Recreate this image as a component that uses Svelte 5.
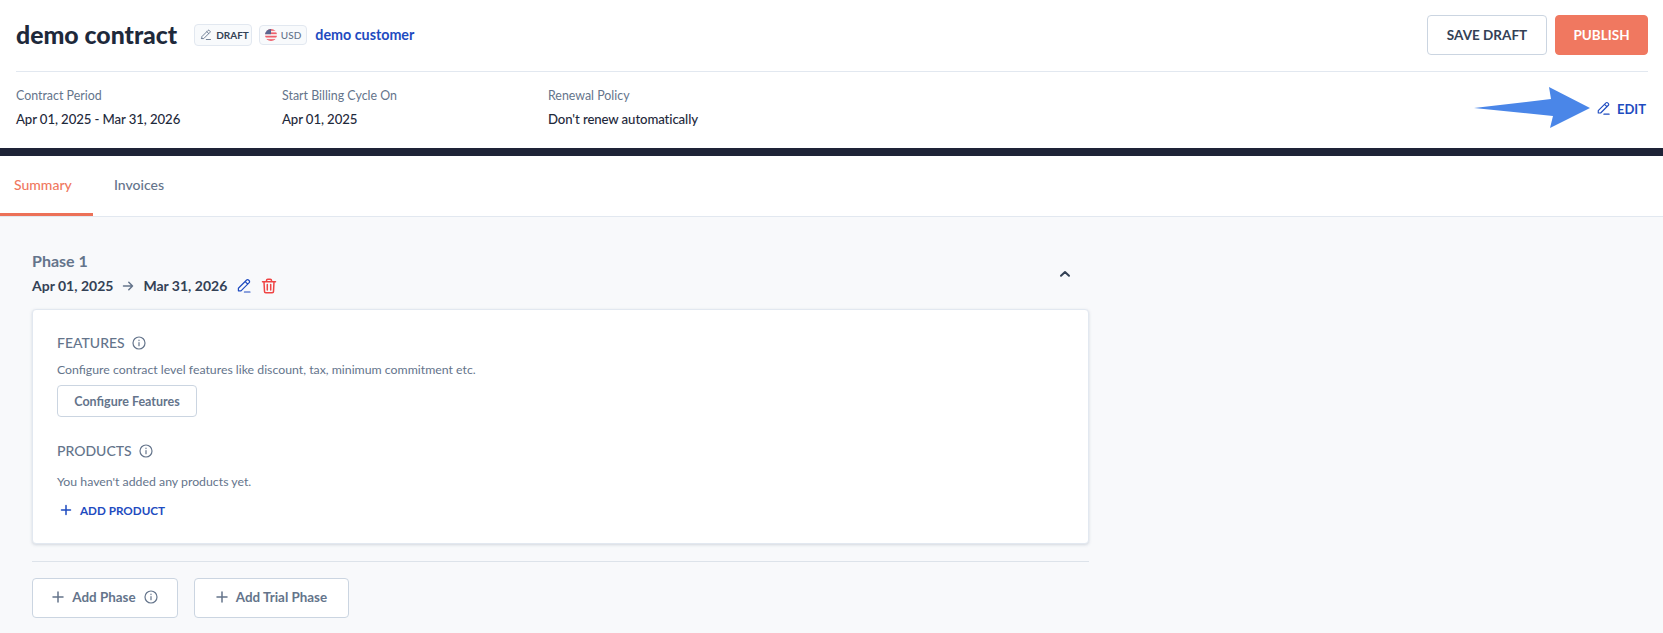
<script>
  const meta = [
    { label: 'Contract Period', value: 'Apr 01, 2025 - Mar 31, 2026' },
    { label: 'Start Billing Cycle On', value: 'Apr 01, 2025' },
    { label: 'Renewal Policy', value: "Don't renew automatically" }
  ];
  const pencil = 'M3 16v-3.200L13.300 2.500a1.600 1.600 0 0 1 2.300 0l.9.9a1.600 1.600 0 0 1 0 2.300L6.200 16H3zM11.400 4.400l3.200 3.200M10.500 17.500h7';
</script>

<div class="page">
  <header class="head">
    <div class="top">
      <h1>demo contract</h1>
      <span class="chip draft">
        <svg viewBox="0 0 20 20" width="12" height="12"><path d={pencil} /></svg>
        DRAFT
      </span>
      <span class="chip usd">
        <svg viewBox="0 0 12 12" width="12" height="12">
          <clipPath id="flag"><circle cx="6" cy="6" r="6" /></clipPath>
          <g clip-path="url(#flag)">
            <rect width="12" height="12" fill="#f6f1f1" />
            <rect y="0" width="12" height="1.800" fill="#ee5f6c" />
            <rect y="3.400" width="12" height="1.700" fill="#ee5f6c" />
            <rect y="6.800" width="12" height="1.700" fill="#ee5f6c" />
            <rect y="10.200" width="12" height="1.800" fill="#ee5f6c" />
            <rect width="6" height="5.200" fill="#5a6690" />
          </g>
        </svg>
        USD
      </span>
      <span class="customer">demo customer</span>
      <div class="actions">
        <button class="save">SAVE DRAFT</button>
        <button class="publish">PUBLISH</button>
      </div>
    </div>
    <div class="meta">
      {#each meta as m}
        <div class="meta-col">
          <div class="meta-label">{m.label}</div>
          <div class="meta-value">{m.value}</div>
        </div>
      {/each}
      <span class="edit">
        <svg viewBox="0 0 20 20" width="15" height="15"><path d={pencil} /></svg>
        EDIT
      </span>
      <svg class="arrow" viewBox="0 0 120 44" width="120" height="44">
        <polygon points="0,21 77,12 75,0 116,21 76,41 79,29" fill="#4a86e8" />
      </svg>
    </div>
  </header>
  <div class="bar"></div>
  <nav class="tabs">
    <span class="tab active">Summary</span>
    <span class="tab">Invoices</span>
  </nav>
  <main class="content">
    <section class="phase">
      <div class="phase-head">
        <div>
          <div class="phase-title">Phase 1</div>
          <div class="phase-dates">
            <span>Apr 01, 2025</span>
            <svg class="to" viewBox="0 0 12 12" width="12" height="12"><path d="M1.500 6h9M6.800 2.300 10.500 6l-3.700 3.700" /></svg>
            <span>Mar 31, 2026</span>
            <svg class="pen" viewBox="0 0 20 20" width="16" height="16"><path d={pencil} /></svg>
            <svg class="trash" viewBox="0 0 16 16" width="16" height="16"><path d="M1.500 3.700h13M5.500 3.500V2.600c0-.8.5-1.300 1.300-1.300h2.400c.8 0 1.300.5 1.300 1.300v.9M3 3.700l.5 9.800c0 .8.6 1.200 1.300 1.200h6.400c.7 0 1.300-.4 1.300-1.200l.5-9.800M6.300 6.500v5.500M9.700 6.500v5.500" /></svg>
          </div>
        </div>
        <svg class="chev" viewBox="0 0 12 12" width="12" height="12"><path d="M2 7.800 6 4l4 3.800" /></svg>
      </div>
      <div class="card">
        <div class="sec-title">FEATURES
          <svg class="info" viewBox="0 0 14 14" width="14" height="14"><path d="M13 7A6 6 0 1 1 1 7a6 6 0 0 1 12 0zM7 6.500v3.200M7 4.200v.4" /></svg>
        </div>
        <p class="features-text">Configure contract level features like discount, tax, minimum commitment etc.</p>
        <button class="configure">Configure Features</button>
        <div class="sec-title products">PRODUCTS
          <svg class="info" viewBox="0 0 14 14" width="14" height="14"><path d="M13 7A6 6 0 1 1 1 7a6 6 0 0 1 12 0zM7 6.500v3.200M7 4.200v.4" /></svg>
        </div>
        <p class="products-text">You haven't added any products yet.</p>
        <div class="add-product">
          <svg viewBox="0 0 12 12" width="12" height="12"><path d="M6 1.500v9M1.500 6h9" /></svg>
          ADD PRODUCT
        </div>
      </div>
      <div class="add-row">
        <button class="add phase-btn">
          <svg class="plus" viewBox="0 0 12 12" width="12" height="12"><path d="M6 1v10M1 6h10" /></svg>
          <span>Add Phase</span>
          <svg class="info" viewBox="0 0 14 14" width="14" height="14"><path d="M13 7A6 6 0 1 1 1 7a6 6 0 0 1 12 0zM7 6.500v3.200M7 4.200v.4" /></svg>
        </button>
        <button class="add trial-btn">
          <svg class="plus" viewBox="0 0 12 12" width="12" height="12"><path d="M6 1v10M1 6h10" /></svg>
          <span>Add Trial Phase</span>
        </button>
      </div>
    </section>
  </main>
</div>

<style>
  :global(body) {
    margin: 0;
    background: #fff;
  }
  .page {
    font-family: Lato, "Open Sans", sans-serif;
    color: #1f2937;
    height: 633px;
    overflow: hidden;
    display: flex;
    flex-direction: column;
  }
  svg path {
    fill: none;
    stroke: currentColor;
    stroke-width: 1.500;
    stroke-linecap: round;
    stroke-linejoin: round;
  }
  button {
    font-family: inherit;
    background: #fff;
    border: 1px solid #cbd5e1;
    border-radius: 4px;
    padding: 0;
  }
  .head {
    padding: 0 15px 0 16px;
    height: 148px;
    box-sizing: border-box;
  }
  .top {
    display: flex;
    align-items: center;
    height: 72px;
    padding-bottom: 2px;
    border-bottom: 1px solid #e2e8f0;
    box-sizing: border-box;
  }
  h1 {
    margin: 0 17px 0 0;
    font-size: 24.800px;
    font-weight: 900;
    color: #1e293b;
  }
  .chip {
    display: inline-flex;
    align-items: center;
    gap: 4px;
    height: 20px;
    border: 1px solid #e2e8f0;
    border-radius: 4px;
    background: #f8fafc;
    font-size: 10px;
  }
  .draft {
    padding: 0 2px 0 5px;
    margin-right: 7px;
    font-weight: 700;
    color: #334155;
  }
  .draft svg {
    color: #64748b;
  }
  .usd {
    padding: 0 5px;
    margin-right: 8px;
    color: #64748b;
    font-weight: 500;
    height: 18px;
  }
  .customer {
    font-size: 14.300px;
    font-weight: 700;
    color: #1e4bc0;
  }
  .actions {
    margin-left: auto;
    display: flex;
    gap: 8px;
  }
  .actions button {
    height: 40px;
    font-size: 13.500px;
    font-weight: 700;
  }
  .save {
    width: 120px;
    color: #334155;
  }
  .publish {
    width: 93px;
    color: #fff;
    background: #f07860;
    border-color: #f07860;
  }
  .meta {
    display: flex;
    position: relative;
    padding-top: 17px;
  }
  .meta-col {
    width: 266px;
  }
  .meta-label {
    font-size: 12.400px;
    line-height: 14px;
    color: #64748b;
  }
  .meta-value {
    font-size: 13.200px;
    letter-spacing: -0.1px;
    line-height: 16px;
    font-weight: 500;
    color: #1e293b;
    margin-top: 8px;
  }
  .edit {
    margin-left: auto;
    margin-right: 2px;
    align-self: center;
    display: flex;
    align-items: center;
    gap: 6px;
    margin-top: 1px;
    font-size: 13px;
    font-weight: 700;
    color: #1e4bc0;
  }
  .arrow {
    position: absolute;
    right: 54px;
    top: 15px;
  }
  .bar {
    height: 8px;
    background: #1e2337;
    flex: none;
  }
  .tabs {
    display: flex;
    height: 61px;
    flex: none;
    background: #fff;
    border-bottom: 1px solid #e2e8f0;
    box-sizing: border-box;
  }
  .tab {
    display: flex;
    align-items: center;
    padding: 0 0 3px 0;
    font-size: 14px;
    font-weight: 500;
    color: #64748b;
    box-sizing: border-box;
  }
  .active {
    color: #f07860;
    width: 93px;
    padding-left: 14px;
    margin-right: 21px;
    box-shadow: inset 0 -3px 0 #ec7158;
    height: 60px;
  }
  .content {
    flex: 1;
    background: #f8f9fb;
    padding: 34px 0 0 32px;
  }
  .phase {
    width: 1057px;
  }
  .phase-head {
    display: flex;
    justify-content: space-between;
    align-items: center;
    padding-right: 18px;
    margin-bottom: 13px;
  }
  .phase-title {
    font-size: 16px;
    line-height: 20px;
    font-weight: 700;
    color: #64748b;
  }
  .phase-dates {
    display: flex;
    align-items: center;
    gap: 9px;
    margin-top: 5px;
    font-size: 14px;
    line-height: 20px;
    font-weight: 700;
    color: #334155;
  }
  .to {
    color: #64748b;
  }
  .pen {
    color: #1e4bc0;
  }
  .trash {
    color: #ef4444;
  }
  .chev {
    color: #334155;
  }
  .chev path {
    stroke-width: 2;
  }
  .card {
    height: 235px;
    box-sizing: border-box;
    background: #fff;
    border: 1px solid #e2e8f0;
    border-radius: 4px;
    box-shadow: 0 1px 3px rgba(100, 116, 139, 0.25);
    padding: 25px 24px;
  }
  .sec-title {
    display: flex;
    align-items: center;
    gap: 7px;
    font-size: 14px;
    line-height: 16px;
    font-weight: 500;
    color: #64748b;
  }
  .info {
    color: #64748b;
  }
  .info path {
    stroke-width: 1.200;
  }
  .card p {
    margin: 0;
    font-size: 12.300px;
    line-height: 14px;
    color: #64748b;
  }
  .features-text {
    padding-top: 12px;
  }
  .configure {
    display: block;
    margin-top: 8px;
    width: 140px;
    height: 32px;
    font-size: 12.500px;
    font-weight: 700;
    color: #64748b;
  }
  .products {
    margin-top: 26px;
  }
  .products-text {
    padding-top: 16px;
  }
  .add-product {
    display: flex;
    align-items: center;
    gap: 8px;
    margin-top: 13px;
    padding-left: 3px;
    font-size: 11.700px;
    line-height: 16px;
    font-weight: 700;
    color: #1e4bc0;
  }
  .add-row {
    display: flex;
    gap: 16px;
    margin-top: 17px;
    padding-top: 16px;
    border-top: 1px solid #dde3ea;
  }
  .add {
    display: flex;
    align-items: center;
    justify-content: center;
    gap: 8px;
    height: 40px;
    padding-bottom: 2px;
    font-size: 13.400px;
    font-weight: 700;
    color: #64748b;
  }
  .phase-btn {
    width: 146px;
  }
  .trial-btn {
    width: 155px;
  }
</style>
